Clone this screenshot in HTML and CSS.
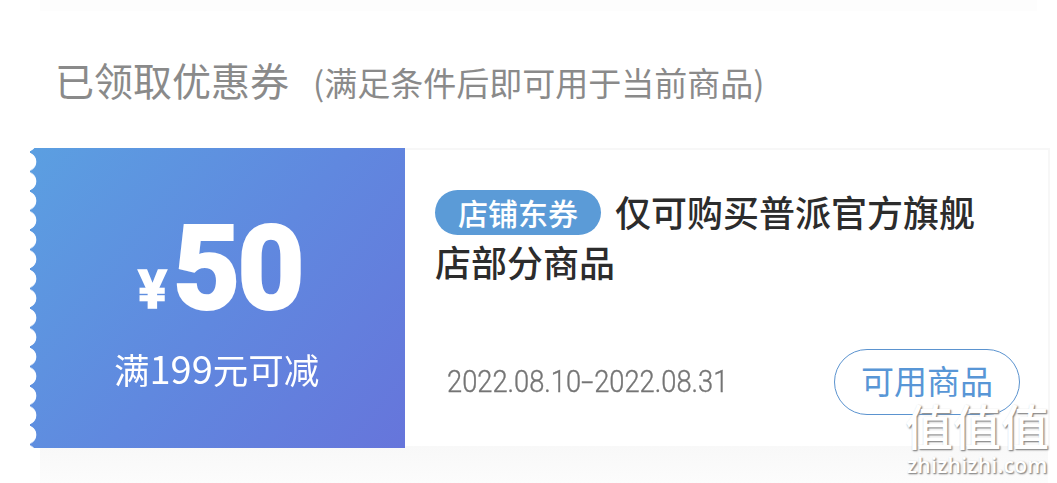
FILE: index.html
```html
<!DOCTYPE html>
<html lang="zh-CN">
<head>
    <meta charset="UTF-8">
    <meta name="viewport" content="width=device-width, initial-scale=1.0">
    <title>优惠券</title>
    <link rel="stylesheet" href="styles.css">
</head>
<body>
    <div class="prev-shadow"></div>
    <div class="title">
        <h2>已领取优惠券</h2>
        <span class="tip">(满足条件后即可用于当前商品)</span>
    </div>

    <div class="coupon">
        <div class="coupon-left">
            <div class="price"><span class="yen">¥</span><span class="num">50</span></div>
            <div class="limit">满<span class="limit-num">199</span>元可减</div>
        </div>
        <div class="coupon-right">
            <p class="desc"><span class="tag">店铺东券</span>仅可购买普派官方旗舰店部分商品</p>
            <div class="bottom">
                <span class="date">2022.08.10<span class="dash">-</span>2022.08.31</span>
                <a class="btn">可用商品</a>
            </div>
        </div>
    </div>
    <div class="next-shadow"></div>

    <div class="watermark">
        <div class="wm-logo">值值值</div>
        <div class="wm-url">zhizhizhi.com</div>
    </div>
</body>
</html>
```

FILE: styles.css
```css
* {
    box-sizing: border-box;
}
body {
    margin: 0;
    height: 483px;
    overflow: hidden;
    position: relative;
    background: #fff;
    font-family: "Noto Sans CJK SC", sans-serif;
}
.prev-shadow {
    height: 11px;
    margin: 0 20px 0 40px;
    background: #fdfdfd;
}
.title {
    display: flex;
    align-items: baseline;
    height: 137px;
    padding: 40px 0 0 55px;
    color: #8a8a8a;
    white-space: nowrap;
}
.title h2 {
    margin: 0;
    font-size: 39px;
    font-weight: 400;
    line-height: 56px;
}
.tip {
    margin-left: 24px;
    font-size: 33px;
}
.coupon {
    display: flex;
    width: 1020px;
    height: 300px;
    margin-left: 30px;
}
.coupon-left {
    width: 375px;
    padding-top: 66px;
    color: #fff;
    background: linear-gradient(129deg, #5b9fe1 0%, #6088df 52%, #6675db 100%);
    /* round bites along the left edge */
    -webkit-mask: radial-gradient(circle at -3px 9.75px, transparent 9px, #000 9.7px) 0 4px / 100% 19.5px;
    mask: radial-gradient(circle at -3px 9.75px, transparent 9px, #000 9.7px) 0 4px / 100% 19.5px;
}
.price {
    display: flex;
    align-items: baseline;
    height: 121px;
    padding-left: 108px;
    font-family: Roboto, sans-serif;
    font-weight: 700;
    line-height: 110px;
}
.yen {
    width: 35px;
    font-size: 54px;
    -webkit-text-stroke: 1.5px #fff;
}
.num {
    font-size: 115px;
    letter-spacing: -1px;
    -webkit-text-stroke: 4px #fff;
}
.limit {
    padding-left: 84px;
    font-size: 35.5px;
    line-height: 66px;
    white-space: nowrap;
}
.limit-num {
    font-size: 38px;
}
.coupon-right {
    display: flex;
    flex-direction: column;
    justify-content: space-between;
    width: 645px;
    height: 298px;
    padding: 36px 28px 31px 30px;
    border-top: 2px solid #f7f7f7;
    border-right: 2px solid #f7f7f7;
}
.desc {
    margin: 0;
    width: 560px;
    color: #2c2c2c;
    font-size: 36px;
    font-weight: 500;
    line-height: 50px;
    word-break: break-all;
}
.tag {
    display: inline-block;
    width: 166px;
    height: 45px;
    margin: 4px 14px 0 0;
    border-radius: 23px;
    background: #5b9bd7;
    color: #fff;
    font-size: 30px;
    line-height: 44px;
    text-align: center;
    vertical-align: top;
}
.bottom {
    display: flex;
    justify-content: space-between;
    align-items: center;
}
.date {
    width: 290px;
    margin: -2px 0 0 12px;
    color: #757575;
    font-family: Roboto, sans-serif;
    font-size: 31px;
    font-weight: 300;
    white-space: nowrap;
    transform: scaleX(0.88);
    transform-origin: left;
    -webkit-text-stroke: 0.4px #757575;
}
.dash {
    display: inline-block;
    margin: 0 3px;
    transform: scaleX(1.6);
}
.btn {
    width: 186px;
    height: 66px;
    border: 1px solid #5b93cf;
    border-radius: 33px;
    color: #5896d6;
    font-size: 33px;
    line-height: 61px;
    text-align: center;
}
.next-shadow {
    height: 37px;
    margin: -2px 9px 0 40px;
    background: linear-gradient(#f8f8f8, #fcfcfc);
    position: relative;
    z-index: -1;
}
.watermark {
    position: absolute;
    left: 905px;
    top: 396px;
    color: #fff;
    text-shadow: 1px 1px 2px #888, 1px 1px 1px #aaa;
    white-space: nowrap;
}
.wm-logo {
    font-size: 48px;
    font-weight: 500;
    line-height: 56px;
}
.wm-url {
    margin-left: 2px;
    font-family: "Open Sans", sans-serif;
    font-size: 21px;
    font-weight: 600;
    line-height: 26px;
    letter-spacing: 0.3px;
}
```
